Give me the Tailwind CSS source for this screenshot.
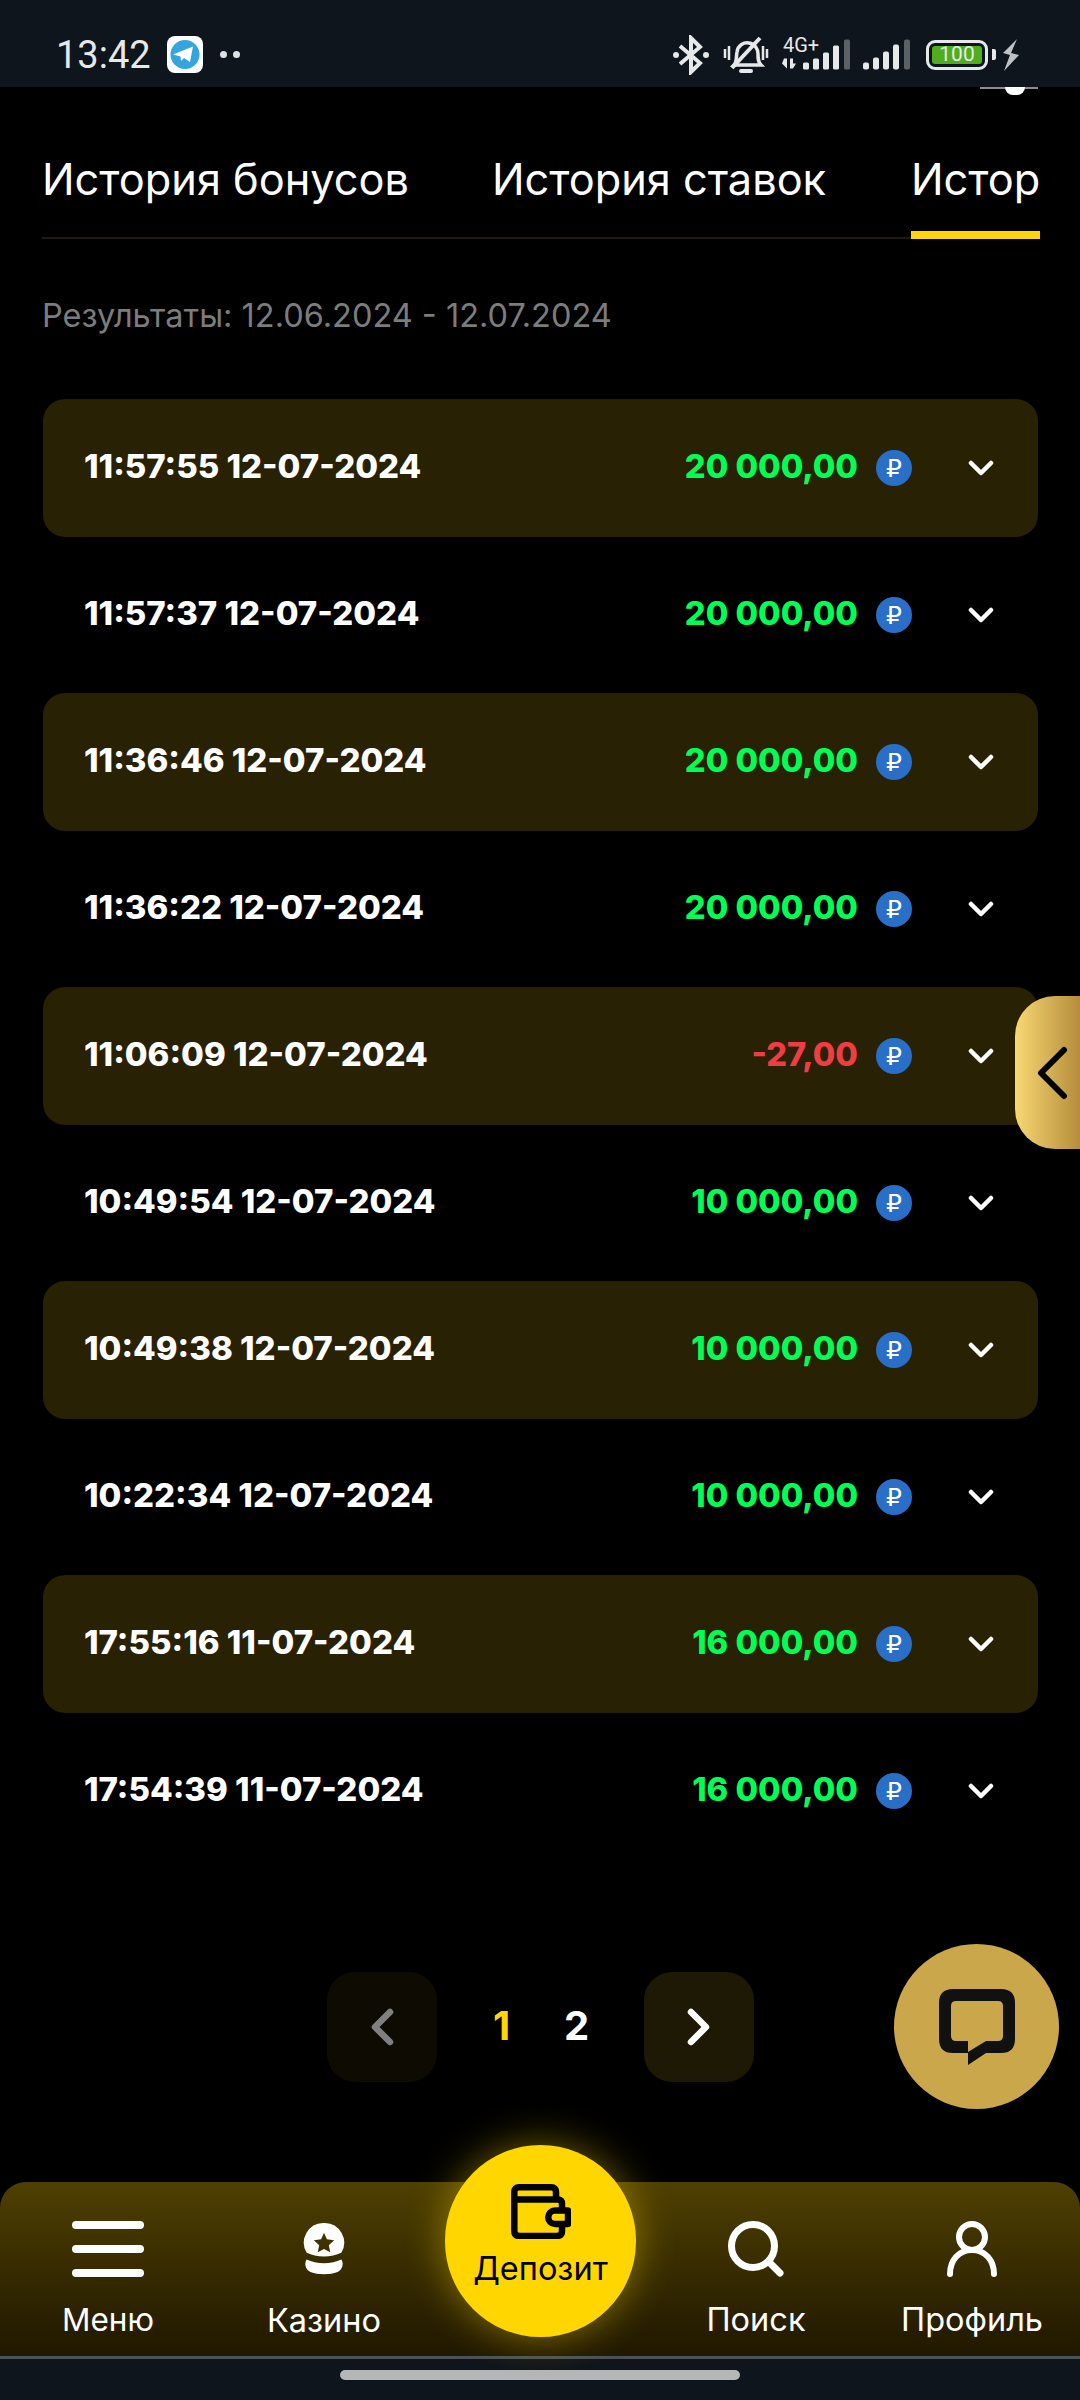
<!DOCTYPE html>
<html lang="ru">
<head>
  <meta charset="UTF-8" />
  <title>История</title>
  <script src="https://cdn.jsdelivr.net/npm/@tailwindcss/browser@4"></script>
</head>
<body class="bg-black">
  <div class="relative w-[1080px] h-[2400px] overflow-hidden bg-black text-white font-['Inter',sans-serif] flex flex-col">

    <!-- sliver of the scrolled-away icon under the status bar -->
    <div class="absolute left-[980px] top-[87px] w-[58px] h-[2px] bg-[#8c8c8c]"></div>
    <div class="absolute left-[1005px] top-[87px] w-[20px] h-[8px] rounded-b-full bg-white"></div>

    <!-- status bar -->
    <div class="h-[87px] shrink-0 bg-[#0e151c] flex items-center pl-[56px] pr-[60px] pt-[22px] text-[#e6e8ea]">
      <span class="font-['Roboto',sans-serif] text-[38px] leading-none w-[111px]">13:42</span>
      <svg class="w-[36px] h-[37px]" viewBox="0 0 36 37">
        <rect width="36" height="37" rx="8" fill="#fff"/>
        <circle cx="18" cy="18.5" r="14.5" fill="#34a5de"/>
        <path d="M6 18.5 26 10.500 23 26 17 22 14 25 13.500 20.500Z" fill="#fff"/>
      </svg>
      <div class="flex gap-[6px] ml-[17px]">
        <span class="w-[7px] h-[7px] rounded-full bg-[#dfe2e4]"></span>
        <span class="w-[7px] h-[7px] rounded-full bg-[#dfe2e4]"></span>
      </div>
      <div class="ml-auto flex items-center">
        <svg class="w-[36px] h-[40px]" viewBox="0 0 36 40" fill="none" stroke="#e6e8ea" stroke-width="4">
          <path d="M7 11 27 28 18 37V3L27 12 7 29"/>
          <circle cx="3" cy="20" r="3" fill="#e6e8ea" stroke="none"/>
          <circle cx="33" cy="20" r="3" fill="#e6e8ea" stroke="none"/>
        </svg>
        <svg class="w-[46px] h-[40px] ml-[14px]" viewBox="0 0 46 40" fill="none" stroke="#e6e8ea" stroke-width="3.5">
          <path d="M2 14v9M6 11v14M40 11v14M44 14v9" stroke-width="2.5"/>
          <path d="M11 30c3-3 2-8 3-13 1-7 7-10 12-9 6 1 9 6 9 11 0 5 0 8 3 11Z"/>
          <path d="M9 33 37 3" stroke-width="4"/>
          <path d="M18 36h10" stroke-width="4" stroke-linecap="round"/>
        </svg>
        <div class="relative w-[70px] h-[36px] ml-[12px]">
          <span class="absolute left-[2px] top-[-2px] font-['Roboto',sans-serif] text-[20px] leading-none">4G+</span>
          <svg class="absolute left-0 top-0 w-[70px] h-[36px]" viewBox="0 2.500 70 36" fill="#e6e8ea">
            <path d="M3 24h3v10l-5-5ZM9 24h3v5l3 0-3 5H9Z"/>
            <rect x="22" y="28" width="6" height="7" rx="1.5"/>
            <rect x="32" y="24" width="6" height="11" rx="1.5"/>
            <rect x="42" y="18" width="6" height="17" rx="1.5"/>
            <rect x="52" y="11" width="6" height="24" rx="1.5"/>
            <rect x="63" y="5" width="6" height="30" rx="1.5" fill="#5c6165"/>
          </svg>
        </div>
        <svg class="w-[48px] h-[36px] ml-[12px]" viewBox="0 2.500 48 36" fill="#e6e8ea">
          <rect x="0" y="28" width="6" height="7" rx="2"/>
          <rect x="10" y="23" width="6" height="12" rx="2"/>
          <rect x="20" y="17" width="6" height="18" rx="2"/>
          <rect x="30" y="10" width="6" height="25" rx="2"/>
          <rect x="41" y="5" width="6" height="30" rx="2" fill="#5c6165"/>
        </svg>
        <div class="relative w-[62px] h-[30px] ml-[15px] border-[3px] border-[#e6e8ea] rounded-[9px] p-[3px]">
          <div class="h-full bg-[#4fae1b] rounded-[3px] flex items-center justify-center font-['Roboto',sans-serif] text-[21px] leading-none">100</div>
          <span class="absolute right-[-11px] top-[6px] w-[4px] h-[11px] bg-[#e6e8ea] rounded-r-[2px]"></span>
        </div>
        <svg class="w-[18px] h-[32px] ml-[14px]" viewBox="0 0 18 32" fill="#bfc2c4">
          <path d="M15 0 1 14l7 2-6 16 15-16-8-2Z"/>
        </svg>
      </div>
    </div>

    <!-- tabs -->
    <div class="mt-[65px] ml-[42px] w-[998px] h-[87px] border-b-2 border-[#1e1b0d] flex justify-between text-[43.3px] leading-none whitespace-nowrap shrink-0">
      <div class="pt-[6px]">История бонусов</div>
      <div class="pt-[6px] ml-[83px]">История ставок</div>
      <div class="pt-[6px] ml-auto w-[129px] h-[87px] border-b-8 border-[#ffd60a]">Истор</div>
    </div>

    <p class="mt-[57px] ml-[42px] text-[32.5px] leading-[40px] text-[#7c7c7c]">Результаты: 12.06.2024 - 12.07.2024</p>

    <!-- transactions -->
    <div id="rows" class="mt-[63px] mx-[43px] w-[995px] flex flex-col gap-[9px]"></div>

    <!-- pagination -->
    <div class="mt-[112px] ml-[327px] flex items-center shrink-0">
      <div class="w-[110px] h-[110px] rounded-[28px] bg-[#0e0c02] flex items-center justify-center">
        <svg class="w-[24px] h-[38px]" viewBox="0 0 24 38" fill="none" stroke="#808080" stroke-width="6.500" stroke-linecap="round" stroke-linejoin="round"><path d="M20 4 5 19l15 15"/></svg>
      </div>
      <span class="w-[75px] ml-[27px] mb-[3px] text-center text-[#ffd60a] text-[40px] font-bold leading-none">1</span>
      <span class="w-[75px] mb-[3px] text-center text-[40px] font-bold leading-none">2</span>
      <div class="ml-[30px] w-[110px] h-[110px] rounded-[28px] bg-[#1e1904] flex items-center justify-center">
        <svg class="w-[24px] h-[38px]" viewBox="0 0 24 38" fill="none" stroke="#fff" stroke-width="6.500" stroke-linecap="round" stroke-linejoin="round"><path d="M4 4l15 15L4 34"/></svg>
      </div>
    </div>

    <!-- bottom nav -->
    <div class="mt-auto shrink-0">
      <div class="h-[174px] rounded-t-[26px] bg-gradient-to-b from-[#4f4002] to-[#201800] grid grid-cols-5 text-[32.5px] leading-none text-center">
        <div class="flex flex-col items-center pt-[39px]">
          <svg class="w-[72px] h-[56px]" viewBox="0 0 72 56" fill="#fff">
            <rect x="0" y="0" width="72" height="8" rx="4"/>
            <rect x="0" y="24" width="72" height="8" rx="4"/>
            <rect x="0" y="48" width="72" height="8" rx="4"/>
          </svg>
          <span class="mt-[27px] text-[31.5px]">Меню</span>
        </div>
        <div class="flex flex-col items-center pt-[41px]">
          <svg class="w-[42px] h-[52px]" viewBox="0 0 42 54" fill="#fff">
            <path fill-rule="evenodd" d="M21 0a20.500 20.500 0 0 1 18 31c-10 5-26 5-36 0A20.500 20.500 0 0 1 21 0Zm0 10-3 7-7.500 1 5.500 5-1.500 7.500 6.500-3.500 6.500 3.500-1.500-7.500 5.500-5-7.500-1Z"/>
            <path d="M3 38c10 5 26 5 36 0 3 4 1 11-4 13-8 3-20 3-28 0-5-2-7-9-4-13Z"/>
          </svg>
          <span class="mt-[30px]">Казино</span>
        </div>
        <div></div>
        <div class="flex flex-col items-center pt-[39px]">
          <svg class="w-[56px] h-[56px]" viewBox="0 0 56 56" fill="none" stroke="#fff" stroke-width="7" stroke-linecap="round">
            <circle cx="25" cy="25" r="21.500"/>
            <path d="M42 42l10 10"/>
          </svg>
          <span class="mt-[27px]">Поиск</span>
        </div>
        <div class="flex flex-col items-center pt-[39px]">
          <svg class="w-[50px] h-[56px]" viewBox="0 0 50 56" fill="none" stroke="#fff" stroke-width="6" stroke-linecap="round">
            <circle cx="25" cy="16" r="13"/>
            <path d="M3 53c0-14 9-24 22-24s22 10 22 24"/>
          </svg>
          <span class="mt-[27px]">Профиль</span>
        </div>
      </div>
      <div class="h-[3px] bg-[#4a5157]"></div>
      <div class="h-[41px] bg-[#0e151c] flex justify-center pt-[11px]">
        <div class="w-[400px] h-[10px] rounded-full bg-[#b5b6b8]"></div>
      </div>
    </div>

    <!-- deposit button over nav -->
    <div class="absolute left-[445px] top-[2145px] w-[191px] h-[192px] rounded-full bg-[#ffd600] shadow-[0_0_40px_rgba(255,214,0,0.45)] flex flex-col items-center pt-[39px] text-black">
      <svg class="w-[60px] h-[55px]" viewBox="0 0 60 55" fill="none" stroke="#000" stroke-width="6.500" stroke-linejoin="round">
        <path d="M45 15.500V8q0-4.700-4.700-4.700H8q-4.700 0-4.700 4.700V47q0 5 5 5H46q5 0 5-5V40"/>
        <path d="M51 26V20q0-4.500-4.500-4.500H3.300"/>
        <path d="M44 26.500H57V40H44a6.700 6.700 0 0 1 0-13.500Z"/>
      </svg>
      <span class="mt-[14px] text-[32.5px] leading-none">Депозит</span>
    </div>

    <!-- side tab -->
    <div class="absolute right-0 top-[996px] w-[65px] h-[153px] rounded-l-[40px] bg-gradient-to-r from-[#f8d873] to-[#b68d3b] flex items-center justify-end pr-[12px]">
      <svg class="w-[32px] h-[54px]" viewBox="0 0 32 54" fill="none" stroke="#000" stroke-width="6" stroke-linecap="round" stroke-linejoin="round"><path d="M28 4 5 27l23 23"/></svg>
    </div>

    <!-- chat button -->
    <div class="absolute left-[894px] top-[1944px] w-[165px] h-[165px] rounded-full bg-[#cba74c] flex items-center justify-center">
      <svg class="w-[76px] h-[76px]" viewBox="0 0 76 76">
        <path fill="#111" fill-rule="evenodd" d="M14 0H62Q76 0 76 14V50Q76 64 62 64H47L29 76V64H14Q0 64 0 50V14Q0 0 14 0ZM17 12Q12 12 12 17V47Q12 52 17 52H29V63L47 52H59Q64 52 64 47V17Q64 12 59 12Z"/>
      </svg>
    </div>
  </div>

  <script>
    const rows = [
      ['11:57:55 12-07-2024', '20 000,00'],
      ['11:57:37 12-07-2024', '20 000,00'],
      ['11:36:46 12-07-2024', '20 000,00'],
      ['11:36:22 12-07-2024', '20 000,00'],
      ['11:06:09 12-07-2024', '-27,00'],
      ['10:49:54 12-07-2024', '10 000,00'],
      ['10:49:38 12-07-2024', '10 000,00'],
      ['10:22:34 12-07-2024', '10 000,00'],
      ['17:55:16 11-07-2024', '16 000,00'],
      ['17:54:39 11-07-2024', '16 000,00']
    ];

    document.getElementById('rows').innerHTML = rows.map(([date, sum], i) => `
      <div class="h-[138px] rounded-[22px] flex items-center pl-[41px] pr-[44px] ${i % 2 === 0 ? 'bg-[#292104]' : ''}">
        <span class="mb-[2px] text-[33px] font-extrabold">${date}</span>
        <span class="ml-auto mb-[2px] text-[32.7px] font-extrabold ${sum[0] === '-' ? 'text-[#ef3e42]' : 'text-[#00ff55]'}">${sum}</span>
        <span class="ml-[18px] w-[36px] h-[36px] rounded-full bg-[#2a6fc7] flex items-center justify-center text-[25px] leading-none font-['DejaVu_Sans',sans-serif]">₽</span>
        <svg class="ml-[56px] w-[26px] h-[16px]" viewBox="0 0 26 16" fill="none" stroke="#fff" stroke-width="4.5" stroke-linecap="round" stroke-linejoin="round"><path d="M3 3l10 10L23 3"/></svg>
      </div>`).join('');
  </script>
</body>
</html>
